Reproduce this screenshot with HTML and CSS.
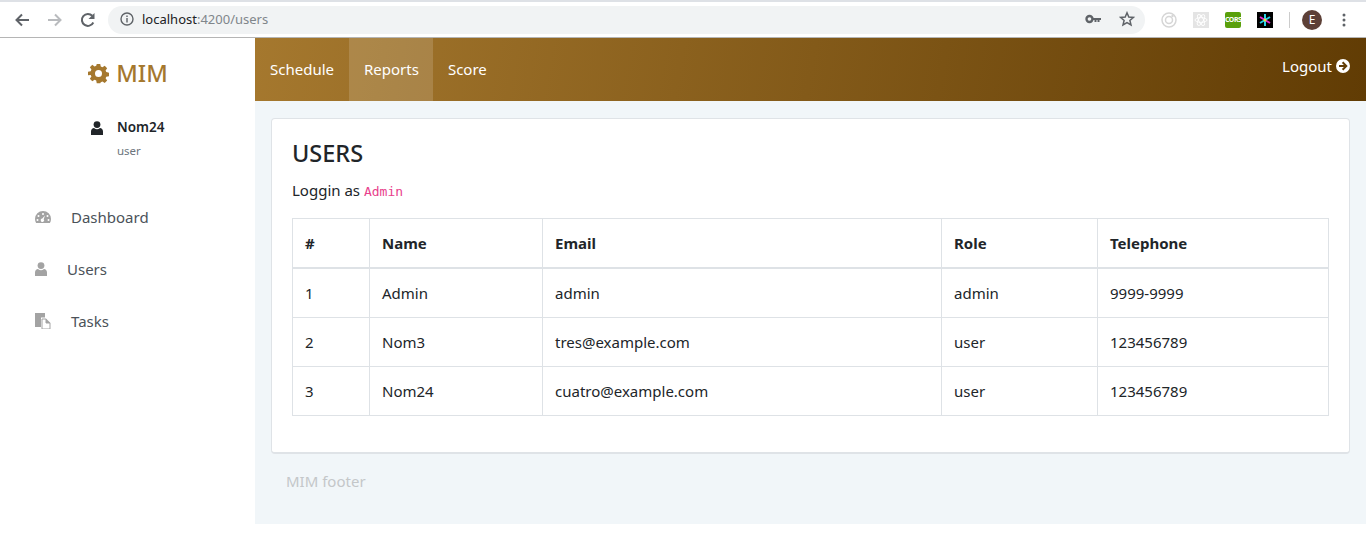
FILE: index.html
```html
<!DOCTYPE html>
<html lang="en">
<head>
  <meta charset="UTF-8">
  <title>MIM</title>
  <link rel="stylesheet" href="styles.css">
</head>
<body>
<div class="browser-bar">
  <div class="browser-nav">
    <svg class="nav-icon" viewBox="0 0 16 16"><path d="M15 8H3M8 2.500 2.500 8 8 13.500" fill="none" stroke="#5f6368" stroke-width="2"/></svg>
    <svg class="nav-icon" viewBox="0 0 16 16"><path d="M1 8h12M8 2.500 13.500 8 8 13.500" fill="none" stroke="#b9bbbe" stroke-width="2"/></svg>
    <svg class="nav-icon" viewBox="0 0 16 16"><path d="M13.300 10.500A6 6 0 1 1 12.300 3.800" fill="none" stroke="#5f6368" stroke-width="2"/><path d="M14.500 1v6h-6z" fill="#5f6368"/></svg>
  </div>
  <div class="omnibox">
    <svg class="info-icon" viewBox="0 0 14 14"><circle cx="7" cy="7" r="6" fill="none" stroke="#5f6368" stroke-width="1.400"/><path d="M7 6v4.500M7 3.500v1.400" stroke="#5f6368" stroke-width="1.400"/></svg>
    <span class="url-host">localhost</span><span class="url-rest">:4200/users</span>
    <span class="omni-right">
      <svg class="key-icon" viewBox="0 0 16 10"><circle cx="4.500" cy="5" r="3" fill="none" stroke="#5f6368" stroke-width="2.400"/><path d="M8 4h8v2h-1.500v2h-2V6h-1v2H9.500V6H8z" fill="#5f6368"/></svg>
      <svg class="star-icon" viewBox="0 0 16 16"><path d="M8 1.800 9.800 6l4.600.4-3.500 3 1.100 4.500L8 11.500l-4 2.400 1.100-4.500-3.500-3L6.200 6z" fill="none" stroke="#5f6368" stroke-width="1.500"/></svg>
    </span>
  </div>
  <div class="extensions">
    <svg class="ext" viewBox="0 0 16 16"><circle cx="8" cy="8" r="7" fill="none" stroke="#d6d6d6" stroke-width="1.500"/><circle cx="8" cy="8" r="3.500" fill="none" stroke="#d6d6d6" stroke-width="1.500"/><circle cx="11.500" cy="4" r="1.200" fill="#d6d6d6"/></svg>
    <svg class="ext" viewBox="0 0 16 16"><rect width="16" height="16" fill="#e4e4e4"/><g fill="none" stroke="#fff" stroke-width=".9"><ellipse cx="8" cy="8" rx="6" ry="2.400"/><ellipse cx="8" cy="8" rx="6" ry="2.400" transform="rotate(60 8 8)"/><ellipse cx="8" cy="8" rx="6" ry="2.400" transform="rotate(120 8 8)"/></g></svg>
    <span class="ext ext-cors">CORS</span>
    <svg class="ext" viewBox="0 0 16 16"><rect width="16" height="16" fill="#000"/><g stroke-width="2"><path d="M8 2v12" stroke="#25d0e6"/><path d="M3 5l10 6" stroke="#e62ad0"/><path d="M13 5 3 11" stroke="#25d0e6"/></g><circle cx="8" cy="8" r="1.500" fill="#f0e040"/></svg>
    <span class="ext-sep"></span>
    <span class="avatar">E</span>
    <svg class="menu-dots" viewBox="0 0 4 14"><circle cx="2" cy="2" r="1.500" fill="#5f6368"/><circle cx="2" cy="7" r="1.500" fill="#5f6368"/><circle cx="2" cy="12" r="1.500" fill="#5f6368"/></svg>
  </div>
</div>

<div class="app">
  <aside class="sidebar">
    <div class="brand">
      <svg class="brand-icon" viewBox="0 0 24 24"><path fill-rule="evenodd" d="M10 1h4l.6 3.100 1.900.8 2.600-1.800 2.800 2.800-1.800 2.600.8 1.900 3.100.6v4l-3.100.6-.8 1.900 1.800 2.600-2.800 2.800-2.600-1.800-1.900.8L14 23h-4l-.6-3.100-1.900-.8-2.600 1.800-2.800-2.800 1.800-2.600-.8-1.900L0 14v-4l3.100-.6.800-1.900-1.800-2.600 2.800-2.800 2.600 1.800 1.900-.8zM12 8a4 4 0 1 0 0 8 4 4 0 0 0 0-8z"/></svg>
      <span>MIM</span>
    </div>
    <div class="profile">
      <svg class="profile-icon" viewBox="0 0 12 14"><circle cx="6" cy="3.600" r="3.400"/><path d="M0 14v-3.500C0 8.500 1.500 7 3 7c1 .8 2 1.200 3 1.200S8 7.800 9 7c1.500 0 3 1.500 3 3.500V14z"/></svg>
      <div>
        <div class="profile-name">Nom24</div>
        <div class="profile-role">user</div>
      </div>
    </div>
    <nav class="side-menu">
      <a class="side-link">
        <svg class="side-icon" viewBox="0 0 16 12"><path fill-rule="evenodd" d="M8 0a8 8 0 0 1 8 8c0 1.500-.4 2.900-1.100 4H1.100A8 8 0 0 1 0 8a8 8 0 0 1 8-8zM8 2a1 1 0 1 0 0 2 1 1 0 0 0 0-2zM3.500 4a1 1 0 1 0 0 2 1 1 0 0 0 0-2zM12.500 4a1 1 0 1 0 0 2 1 1 0 0 0 0-2zM2.500 8a1 1 0 1 0 0 2 1 1 0 0 0 0-2zM13.500 8a1 1 0 1 0 0 2 1 1 0 0 0 0-2zM10 4.500 7.300 7.600a1.700 1.700 0 1 0 1.400.6z"/></svg>
        <span>Dashboard</span>
      </a>
      <a class="side-link">
        <svg class="side-icon side-icon-user" viewBox="0 0 12 14"><circle cx="6" cy="3.600" r="3.400"/><path d="M0 14v-3.500C0 8.500 1.500 7 3 7c1 .8 2 1.200 3 1.200S8 7.800 9 7c1.500 0 3 1.500 3 3.500V14z"/></svg>
        <span>Users</span>
      </a>
      <a class="side-link">
        <svg class="side-icon" viewBox="0 0 16 16"><path d="M0 0h10v4.500H6V14H0z"/><path d="M7 6h4v4h4v6H7z" fill="#fff" stroke="#a3a3a3" stroke-width="1"/><path d="M11 5.500 15.500 10H11z"/></svg>
        <span>Tasks</span>
      </a>
    </nav>
  </aside>

  <div class="content">
    <header class="topbar">
      <a class="top-link">Schedule</a>
      <a class="top-link active">Reports</a>
      <a class="top-link">Score</a>
      <a class="logout">Logout
        <svg class="logout-icon" viewBox="0 0 14 14"><path fill-rule="evenodd" d="M7 0a7 7 0 1 1 0 14A7 7 0 0 1 7 0zM7.300 2.600 5.900 4l2 2H3v2h4.900l-2 2 1.400 1.400L11.700 7z"/></svg>
      </a>
    </header>
    <main class="main">
      <section class="card">
        <h1>USERS</h1>
        <p class="login-line">Loggin as <code>Admin</code></p>
        <table>
          <thead>
            <tr><th class="col-id">#</th><th class="col-name">Name</th><th class="col-email">Email</th><th class="col-role">Role</th><th>Telephone</th></tr>
          </thead>
          <tbody>
            <tr class="first-row"><td>1</td><td>Admin</td><td>admin</td><td>admin</td><td>9999-9999</td></tr>
            <tr><td>2</td><td>Nom3</td><td>tres@example.com</td><td>user</td><td>123456789</td></tr>
            <tr><td>3</td><td>Nom24</td><td>cuatro@example.com</td><td>user</td><td>123456789</td></tr>
          </tbody>
        </table>
      </section>
      <footer class="footer">MIM footer</footer>
    </main>
  </div>
</div>
</body>
</html>
```

FILE: styles.css
```css
* {
  box-sizing: border-box;
}
body {
  margin: 0;
  font-family: "Noto Sans", "Open Sans", sans-serif;
  font-size: 15px;
  color: #212529;
  background: #fff;
}
.browser-bar {
  height: 38px;
  display: flex;
  align-items: center;
  background: #fff;
  border-top: 2px solid #dee1e6;
  border-bottom: 1px solid #b5b5b5;
  padding-left: 14px;
}
.browser-nav {
  display: flex;
  gap: 17px;
  width: 94px;
}
.nav-icon {
  width: 16px;
  height: 16px;
}
.omnibox {
  width: 1037px;
  height: 28px;
  border-radius: 14px;
  background: #f1f3f4;
  display: flex;
  align-items: center;
  padding: 0 0 1px 12px;
  font-size: 13px;
}
.info-icon {
  width: 14px;
  height: 14px;
  margin-right: 8px;
}
.url-host {
  color: #202124;
}
.url-rest {
  color: #80868b;
}
.omni-right {
  margin-left: auto;
  display: flex;
  align-items: center;
  gap: 18px;
  padding-right: 10px;
}
.key-icon {
  width: 16px;
  height: 10px;
}
.star-icon {
  width: 16px;
  height: 16px;
}
.extensions {
  display: flex;
  align-items: center;
  margin-left: 16px;
  gap: 16px;
}
.ext {
  width: 16px;
  height: 16px;
  display: block;
}
.ext-cors {
  background: #5aa00c;
  border-radius: 2px;
  color: #fff;
  font-size: 7px;
  font-weight: 700;
  letter-spacing: -.5px;
  line-height: 16px;
  text-align: center;
  overflow: hidden;
}
.ext-sep {
  width: 1px;
  height: 16px;
  background: #ccc;
}
.avatar {
  width: 20px;
  height: 20px;
  margin-left: -4px;
  border-radius: 50%;
  background: #5d4037;
  color: #fff;
  font-size: 12px;
  line-height: 20px;
  text-align: center;
}
.menu-dots {
  width: 4px;
  height: 14px;
  margin-left: 4px;
}

.app {
  display: flex;
  height: 486px;
}
.sidebar {
  width: 255px;
  flex: none;
  background: #fff;
}
.brand {
  height: 72px;
  padding: 17px 0 0 1px;
  display: flex;
  justify-content: center;
  gap: 7px;
  color: #a5782e;
  font-size: 23.500px;
  font-weight: 500;
  line-height: 36px;
}
.brand-icon {
  width: 21px;
  height: 21px;
  margin-top: 8px;
  fill: #a5782e;
}
.profile {
  display: flex;
  padding-left: 91px;
  height: 81px;
}
.profile-icon {
  width: 12px;
  height: 14px;
  margin: 11px 14px 0 0;
  fill: #212529;
}
.profile-name {
  font-size: 13.500px;
  font-weight: 600;
  line-height: 34px;
}
.profile-role {
  font-size: 11.500px;
  line-height: 14px;
  color: #6c757d;
}
.side-menu {
  display: flex;
  flex-direction: column;
}
.side-link {
  height: 52px;
  padding-left: 35px;
  display: flex;
  align-items: center;
  color: #4b5259;
  font-size: 15px;
}
.side-icon {
  width: 16px;
  height: 16px;
  fill: #a3a3a3;
  margin-right: 20px;
}
.side-icon-user {
  width: 12px;
}

.content {
  flex: 1;
  display: flex;
  flex-direction: column;
}
.topbar {
  height: 63px;
  flex: none;
  display: flex;
  align-items: stretch;
  background: linear-gradient(100deg, #a5782e 0%, #613c04 100%);
  color: #fff;
}
.top-link {
  padding: 0 15px;
  line-height: 62px;
  font-size: 15px;
  color: #fff;
}
.top-link.active {
  padding-right: 14px;
  background: rgba(255, 255, 255, .15);
}
.logout {
  margin-left: auto;
  padding-right: 16px;
  font-size: 15px;
  display: flex;
  align-items: center;
  gap: 4px;
  height: 56px;
}
.logout-icon {
  width: 14px;
  height: 14px;
  fill: #fff;
}
.main {
  height: 423px;
  background: #f1f6f9;
  padding: 17px 16px 0;
}
.card {
  height: 336px;
  background: #fff;
  border: 1px solid #dfe3e7;
  border-bottom-width: 2px;
  border-radius: 4px;
  padding: 19px 20px 20px;
}
h1 {
  margin: 0;
  font-size: 23.500px;
  font-weight: 500;
  line-height: 30px;
}
.login-line {
  margin: 10px 0 14px;
  font-size: 15px;
  line-height: 24px;
}
code {
  font-family: "DejaVu Sans Mono", monospace;
  font-size: 13px;
  color: #e83e8c;
}
table {
  width: 100%;
  border-collapse: collapse;
  table-layout: fixed;
}
th, td {
  border: 1px solid #dee2e6;
  padding: 0 12px;
  height: 49px;
  text-align: left;
  font-size: 15px;
}
th {
  font-weight: 700;
  border-bottom-width: 2px;
}
.first-row td {
  height: 50px;
}
.col-id {
  width: 77px;
}
.col-name {
  width: 173px;
}
.col-email {
  width: 399px;
}
.col-role {
  width: 156px;
}
.footer {
  padding: 17px 15px;
  color: #c4c7c9;
  font-size: 15px;
}
```
